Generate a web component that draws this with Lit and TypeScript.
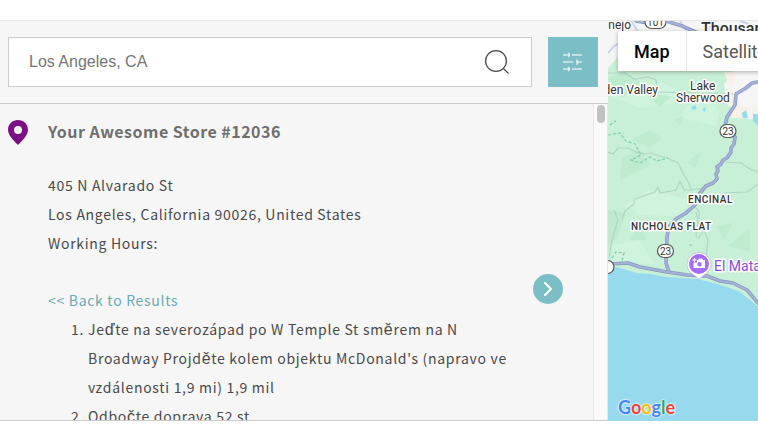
import { LitElement, html, svg, css } from "lit";
import { customElement, property, state } from "lit/decorators.js";

const STEPS = [
  "Jeďte na severozápad po W Temple St směrem na N Broadway Projděte kolem objektu McDonald's (napravo ve vzdálenosti 1,9 mi) 1,9 mil",
  "Odbočte doprava 52 st",
];

@customElement("store-search")
class StoreSearch extends LitElement {
  static styles = css`
    .bar {
      display: flex;
      gap: 16px;
      padding: 16px 10px 16px 8px;
      border-bottom: 1px solid #ccc;
    }
    .field {
      flex: 1;
      min-width: 0;
      display: flex;
      box-sizing: border-box;
      height: 50px;
      background: #fff;
      border: 1px solid #ccc;
    }
    .input {
      flex: 1;
      min-width: 0;
      border: 0;
      padding: 0 0 0 20px;
      background: none;
      outline: none;
      color: #757575;
      font: 16px "Liberation Sans", Arial, sans-serif;
    }
    .search,
    .filter {
      display: flex;
      align-items: center;
      justify-content: center;
      border: 0;
      padding: 0;
      cursor: pointer;
    }
    .search {
      width: 68px;
      background: none;
    }
    .filter {
      width: 50px;
      height: 50px;
      background: #7cbec5;
    }
  `;
  render() {
    return html`
      <form class="bar" @submit=${(e: Event) => e.preventDefault()}>
        <div class="field">
          <input class="input" type="text" aria-label="Location" value="Los Angeles, CA" />
          <button class="search" type="submit" aria-label="Search">
            <svg width="26" height="26" viewBox="0 0 26 26" fill="none" stroke="#4c4c4c" stroke-width="1.3">
              <circle cx="12" cy="12" r="10.4" />
              <path d="M19.2 19.2 L24.6 24.6" />
            </svg>
          </button>
        </div>
        <button class="filter" type="button" aria-label="Filters">
          <svg width="20" height="20" viewBox="0 0 20 20" fill="none" stroke="#bfe0e4">
            <path stroke-width="2" d="M0 3H6M9 3H19M0 10H10M14 10H19M0 17H6M9 17H19" />
            <path stroke-width="1.3" d="M5.500 .5V5.500M13.700 7V13M5.500 14.500V19.500" />
            <path stroke="#dceff1" stroke-width="3" d="M5 3H7M13.500 10H15.500M5 17H7" />
          </svg>
        </button>
      </form>
    `;
  }
}

@customElement("store-card")
class StoreCard extends LitElement {
  @property({ attribute: false }) steps: string[] = [];

  static styles = css`
    .card {
      display: grid;
      grid-template-columns: 20px minmax(0, 1fr) 30px;
      column-gap: 20px;
      padding: 14px 30px 19px 8px;
      color: #4a4a4a;
      font: 14px/29px "Noto Sans CJK JP", sans-serif;
      letter-spacing: 0.05em;
    }
    .pin {
      margin-top: 2px;
    }
    .name {
      margin: 0 0 26px;
      color: #6f6f6f;
      font-size: 16px;
      line-height: 27px;
      font-weight: 700;
      letter-spacing: 0.03em;
    }
    .address {
      margin: 0 0 28px;
      font-style: normal;
    }
    .back {
      color: #69abb2;
      text-decoration: none;
    }
    .steps {
      margin: 0 0 29px;
      padding-left: 40px;
    }
    .caron {
      font-family: "Liberation Sans", Arial, sans-serif;
      font-size: 16px;
      line-height: 1;
    }
    .go {
      align-self: center;
      display: flex;
      align-items: center;
      justify-content: center;
      width: 30px;
      height: 30px;
      padding: 0;
      border: 0;
      border-radius: 50%;
      background: #7cbec5;
      cursor: pointer;
    }
  `;

  // Letters with a caron come from the sans fallback, where they are precomposed.
  private text(s: string) {
    return s
      .split(/([ďěč])/)
      .map((part) => (/^[ďěč]$/.test(part) ? html`<span class="caron">${part}</span>` : part));
  }

  render() {
    return html`
      <article class="card">
        <svg class="pin" width="20" height="25" viewBox="0 0 20 25" aria-hidden="true">
          <path
            fill="#7b1083"
            fill-rule="evenodd"
            d="M10 0C4.4 0 0 4.2 0 9.7C0 15 4.600 19.500 10 25C15.400 19.500 20 15 20 9.700C20 4.200 15.600 0 10 0ZM10 6A4 4 0 1 1 10 14A4 4 0 1 1 10 6Z"
          />
        </svg>
        <div>
          <h2 class="name">Your Awesome Store #12036</h2>
          <address class="address">
            405 N Alvarado St<br />Los Angeles, California 90026, United States<br />Working Hours:
          </address>
          <a class="back" href="#results">&lt;&lt; Back to Results</a>
          <ol class="steps">
            ${this.steps.map((s) => html`<li>${this.text(s)}</li>`)}
          </ol>
        </div>
        <button class="go" type="button" aria-label="Show store">
          <svg width="10" height="14" viewBox="0 0 10 14" fill="none" stroke="#fff" stroke-width="2">
            <path d="M2 1L8 7L2 13" stroke-linecap="round" stroke-linejoin="round" />
          </svg>
        </button>
      </article>
    `;
  }
}

@customElement("store-map")
class StoreMap extends LitElement {
  @state() private mode = "Map";

  static styles = css`
    :host {
      position: relative;
      display: block;
      overflow: hidden;
      background: #97daee;
      font-family: Roboto, sans-serif;
    }
    .canvas {
      position: absolute;
      inset: 0;
      width: 100%;
      height: 100%;
    }
    .label {
      font-size: 12px;
      fill: #333;
      stroke: #fff;
      stroke-width: 3px;
      stroke-linejoin: round;
      paint-order: stroke;
    }
    .end {
      text-anchor: end;
    }
    .city {
      font-size: 16px;
      font-weight: 500;
    }
    .area {
      font-size: 10px;
      font-weight: 500;
      letter-spacing: 0.05em;
    }
    .poi {
      font-size: 14px;
      fill: #8a4bd8;
    }
    .route {
      font-size: 10px;
      fill: #333;
      text-anchor: middle;
    }
    .types {
      position: absolute;
      top: 10px;
      left: 10px;
      display: flex;
      background: #fff;
      box-shadow: 0 1px 4px rgba(0, 0, 0, 0.3);
    }
    .type {
      height: 40px;
      padding: 0 16px;
      border: 0;
      background: none;
      color: #565656;
      font: 18px Roboto, sans-serif;
      cursor: pointer;
    }
    .type + .type {
      border-left: 1px solid #e6e6e6;
    }
    .on {
      color: #000;
      font-weight: 500;
    }
    .logo {
      position: absolute;
      left: 10px;
      bottom: 2px;
      font: 700 18px/24px Lato, sans-serif;
      text-decoration: none;
      text-shadow: 0 0 1px #fff, 0 0 2px #fff, 0 0 2px #fff;
    }
    .blue { color: #4285f4; }
    .red { color: #ea4335; }
    .yellow { color: #fbbc05; }
    .green { color: #34a853; }
  `;

  private shield(x: number, y: number, n: string, w = 16) {
    return svg`
      <rect x=${x - w / 2} y=${y - 6.5} width=${w} height="13" rx="6.5" fill="#fff" stroke="#555" stroke-width="1.2"/>
      <text class="route" x=${x} y=${y + 3.5}>${n}</text>`;
  }

  render() {
    return html`
      <svg class="canvas" viewBox="608 21 150 400" preserveAspectRatio="xMinYMin slice" aria-label="Store map">
        <path fill="#c7f0d6" d="M608 21H758V307L750 300L740 292L727 287L710 282L697 279L667 277L650 274L637 273L620 268L608 266Z" />
        <path fill="#f5f5f5" d="M608 21H758V119L748 119L738 113L728 105L724 84L735 72L700 66L662 62L618 57L608 68Z" />
        <path fill="#f7f1ea" d="M724 72L736 72L733 84L724 92L733 105L731 118L758 119V108L740 106L738 94L730 88Z" />
        <path fill="#c7f0d6" d="M620 52L608 74V92H700L722 78L715 70Z" />
        <path fill="#cff4dd" d="M683 110L700 97L720 110L716 126L682 118ZM608 95L660 82L700 100L640 108ZM625 205L650 190L690 200L680 216L640 215ZM612 245L640 240L655 264L612 262Z" />
        <path fill="#bfebcf" d="M608 78L625 72L640 82L622 98ZM645 93L672 96L660 107ZM632 139L650 130L662 138L650 148ZM622 158L640 149L650 165L620 180ZM687 162L701 152L695 168ZM716 226L733 223L724 240ZM688 223L698 220L694 230ZM630 240L640 220L646 240ZM674 120L684 116L680 125ZM728 246L750 228V252Z" />
        <path fill="#bfeacd" d="M608 210L626 213L617 238L608 244Z" />
        <path fill="#8edcec" d="M753 114H758V125L753 121ZM742 113L746 110L748 118L743 118ZM691 107L695 105L697 109L693 110ZM702 109L706 107L705 112Z" />
        <g fill="none" stroke="#b1d5c6" stroke-width="1.2">
          <path d="M608 73L625 73L634 79L648 77L656 80L657 85M657 92L733 94M608 152L613 154L618 148L628 148L636 152L645 154L650 153L660 156L667 158L678 163L684 175L689 183L691 190L704 188" />
          <path d="M622 219L625 211L634 204L635 199L655 192L658 187L660 193L676 190L680 181L684 190H691M723 162L741 163L750 169L758 172M702 201L712 200L724 193L747 192L758 184M695 207L699 211V219" />
          <path d="M614 210L618 220L614 233L611 245L609 258M696 212L698 221L696 236L699 238L704 230L708 240L706 257" />
        </g>
        <g fill="none" stroke="#7dcdb0" stroke-width="1.2" stroke-dasharray="3 2">
          <path d="M610 125L616 121M608 135L620 133L626 141L635 144L641 155L631 160L640 163L650 157L657 161L668 158M612 258L616 252L624 253L622 261M689 245H694" />
        </g>
        <path fill="none" stroke="#c9d3e4" stroke-width="2" d="M608 53L614 46L626 40M631 21L639 33M680 21L686 30M700 21L718 33M740 21L758 27" />
        <g fill="none" stroke-linejoin="round" stroke-linecap="round">
          <g stroke="#8797c0" stroke-width="3.6">
            <path d="M636 21L648 23M669 22L682 26L698 33" />
            <path d="M758 82L752 83L746 88L736 94L735 105L727 117L725 126L735 137L734 144L731 148L731 152L727 158L723 160L721 164L717 167L718 171L716 174L717 179L713 183L706 186L700 193L695 205L686 213L676 219L669 227L667 237L666 263L669 272" />
            <path d="M608 264L628 263L640 267L667 272L687 275L707 276L720 281L733 283L747 290L758 303" />
          </g>
          <g stroke="#a5b1d8" stroke-width="2.2">
            <path d="M636 21L648 23M669 22L682 26L698 33" />
            <path d="M758 82L752 83L746 88L736 94L735 105L727 117L725 126L735 137L734 144L731 148L731 152L727 158L723 160L721 164L717 167L718 171L716 174L717 179L713 183L706 186L700 193L695 205L686 213L676 219L669 227L667 237L666 263L669 272" />
            <path d="M608 264L628 263L640 267L667 272L687 275L707 276L720 281L733 283L747 290L758 303" />
          </g>
        </g>
        ${this.shield(655.5, 22, "101", 21)} ${this.shield(728, 131, "23")}
        ${this.shield(665.5, 251, "23")} ${this.shield(606, 267, "")}
        <text class="label end" x="631" y="29">Conejo</text>
        <text class="label city" x="701" y="34">Thousand Oaks</text>
        <text class="label end" x="658" y="94">Hidden Valley</text>
        <text class="label" x="690" y="90">Lake</text>
        <text class="label" x="676" y="102">Sherwood</text>
        <text class="label area" x="688" y="203">ENCINAL</text>
        <text class="label area" x="631" y="230">NICHOLAS FLAT</text>
        <path fill="#fff" stroke="#b9a5d8" stroke-width=".6" d="M699 279.500C696 275 687 273 687 264.500A12 12 0 0 1 711 264.500C711 273 702 275 699 279.500Z" />
        <circle cx="699" cy="264" r="10" fill="#a56bfa" />
        <path fill="#fff" fill-rule="evenodd" d="M697 260H698L699 258.500H702L703 260H705V268H693.500V262.500H697ZM699.500 262A2.200 2.200 0 1 0 699.500 266.400A2.200 2.200 0 1 0 699.500 262Z" />
        <path stroke="#fff" stroke-width="1.200" d="M694.500 258V262M692.500 260H696.500" />
        <text class="label poi" x="714" y="271">El Matador</text>
      </svg>
      <div class="types">
        ${["Map", "Satellite"].map(
          (t) => html`<button
            type="button"
            class="type ${this.mode === t ? "on" : ""}"
            @click=${() => (this.mode = t)}
          >${t}</button>`
        )}
      </div>
      <a class="logo" href="#google"><span class="blue">G</span><span class="red">o</span><span class="yellow">o</span><span class="blue">g</span><span class="green">l</span><span class="red">e</span></a>
    `;
  }
}

@customElement("app-root")
class AppRoot extends LitElement {
  static styles = css`
    :host {
      display: block;
      box-sizing: border-box;
      height: 100vh;
      padding: 20px 0 9px;
      background: #fff;
    }
    .locator {
      display: flex;
      box-sizing: border-box;
      height: 100%;
      border-top: 1px solid #e5e5e5;
    }
    .panel {
      flex: 0 1 608px;
      min-width: 0;
      box-sizing: border-box;
      display: flex;
      flex-direction: column;
      background: #f6f6f6;
      border-bottom: 1px solid #ccc;
    }
    .results {
      flex: 1;
      min-height: 0;
      display: flex;
    }
    .list {
      flex: 1;
      min-width: 0;
      overflow-y: auto;
      scrollbar-width: none;
    }
    .track {
      box-sizing: border-box;
      width: 15px;
      padding: 1px 2px 1px 3px;
      background: #fafafa;
      border: solid #e8e8e8;
      border-width: 0 1px;
    }
    .thumb {
      width: 8px;
      height: 18px;
      border-radius: 4px;
      background: #c1c1c1;
    }
    .map {
      flex: 1 0 150px;
    }
  `;
  render() {
    return html`
      <main class="locator">
        <section class="panel">
          <store-search></store-search>
          <div class="results">
            <div class="list"><store-card .steps=${STEPS}></store-card></div>
            <div class="track"><div class="thumb"></div></div>
          </div>
        </section>
        <store-map class="map"></store-map>
      </main>
    `;
  }
}
